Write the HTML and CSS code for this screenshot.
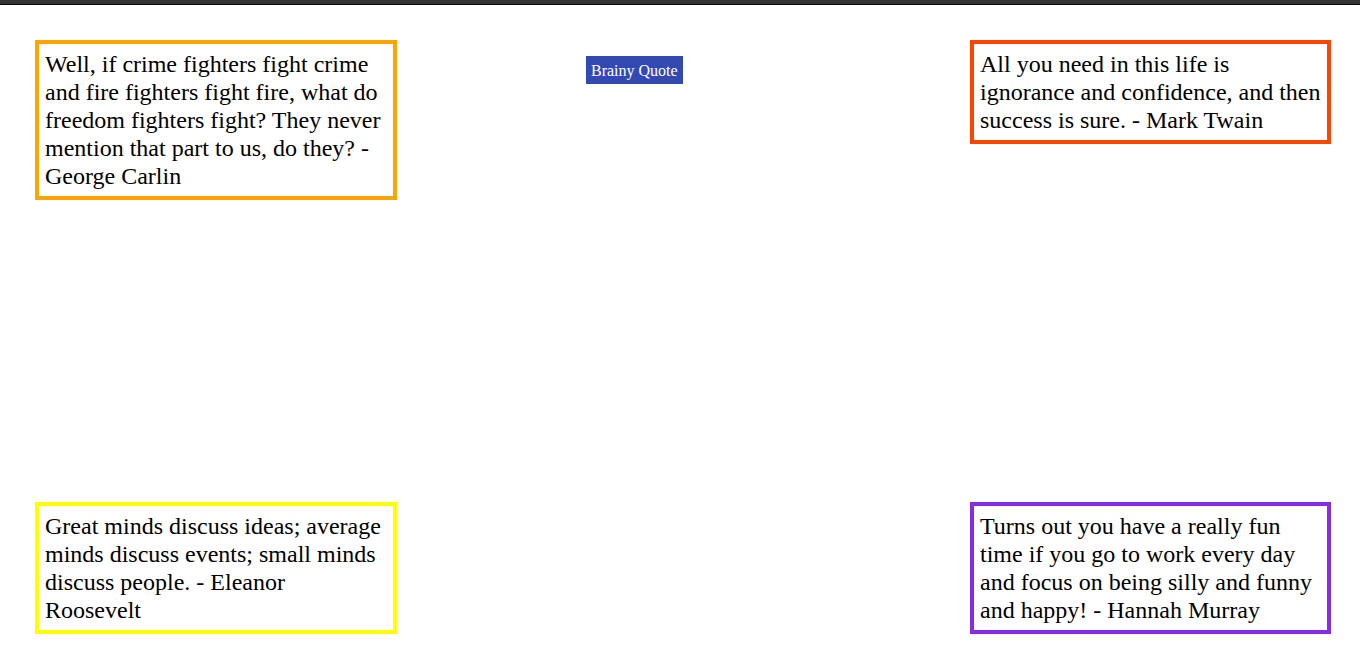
FILE: index.html
```html
<!DOCTYPE html>
<html lang="en">
<head>
<meta charset="utf-8">
<title>Quotes</title>
<link rel="stylesheet" href="styles.css">
</head>
<body>
<div class="topbar"></div>
<main class="board">
  <div class="quote quote-left quote-orange">Well, if crime fighters fight crime and fire fighters fight fire, what do freedom fighters fight? They never mention that part to us, do they? - George Carlin</div>
  <div class="middle"><button class="brainy">Brainy Quote</button></div>
  <div class="quote quote-red">All you need in this life is ignorance and confidence, and then success is sure. - Mark Twain</div>
  <div class="quote quote-left quote-yellow bottom">Great minds discuss ideas; average minds discuss events; small minds discuss people. - Eleanor Roosevelt</div>
  <div class="quote quote-purple bottom">Turns out you have a really fun time if you go to work every day and focus on being silly and funny and happy! - Hannah Murray</div>
</main>
</body>
</html>
```
FILE: styles.css
```css
* { box-sizing: border-box; }
html, body { margin: 0; padding: 0; background: #fff; }
body { font-family: "Liberation Serif", "Times New Roman", serif; color: #000; overflow: hidden; }
.topbar { height: 5px; background: #353535; border-bottom: 1px solid #0a0a0a; }
.board {
  height: calc(100vh - 5px);
  padding: 35px 29px 35px 35px;
  display: grid;
  grid-template-columns: 362px 1fr 361px;
  grid-template-rows: 1fr 1fr;
}
.quote {
  font-size: 24px;
  line-height: 28px;
  border: 4px solid;
  padding: 6px 5px 6px 6px;
  align-self: start;
}
.quote-left { padding-right: 9px; }
.quote.bottom { align-self: end; grid-row: 2; }
.quote-orange { border-color: #ffa500; grid-column: 1; }
.quote-red { border-color: #ff4500; grid-column: 3; }
.quote-yellow { border-color: #ffff00; grid-column: 1; }
.quote-purple { border-color: #8a2be2; grid-column: 3; }
.middle { grid-column: 2; grid-row: 1; padding: 16px 0 0 189px; }
.brainy {
  font-family: "Liberation Serif", "Times New Roman", serif;
  font-size: 16px;
  line-height: 18px;
  color: #fff;
  background: #3349b2;
  border: none;
  padding: 6px 5px 4px;
  height: 28px;
  white-space: nowrap;
  cursor: pointer;
}
```
